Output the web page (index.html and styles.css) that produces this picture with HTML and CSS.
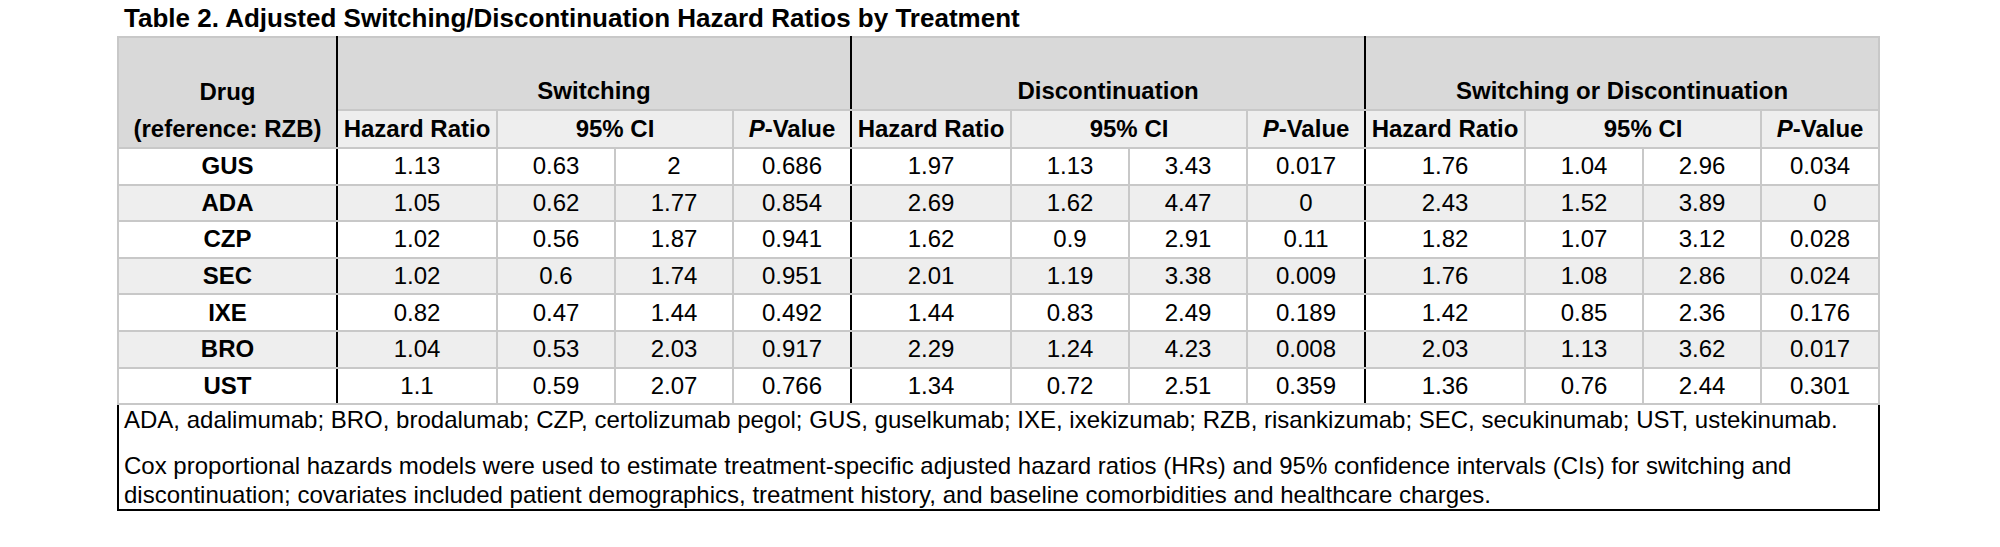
FILE: index.html
```html
<!DOCTYPE html>
<html lang="en">
<head>
<meta charset="utf-8">
<title>Table 2. Adjusted Switching/Discontinuation Hazard Ratios by Treatment</title>
<link rel="stylesheet" href="styles.css">
</head>
<body>
<div class="page">
  <h1 class="title">Table 2. Adjusted Switching/Discontinuation Hazard Ratios by Treatment</h1>
  <table class="hr-table">
    <colgroup>
      <col class="c-drug">
      <col class="c-hr"><col class="c-ci"><col class="c-ci"><col class="c-p">
      <col class="c-hr"><col class="c-ci"><col class="c-ci"><col class="c-p">
      <col class="c-hr"><col class="c-ci"><col class="c-ci"><col class="c-p">
    </colgroup>
    <thead>
      <tr class="head-1">
        <th rowspan="2" class="drug-head group-end">Drug<br>(reference: RZB)</th>
        <th colspan="4" class="group-end">Switching</th>
        <th colspan="4" class="group-end">Discontinuation</th>
        <th colspan="4">Switching or Discontinuation</th>
      </tr>
      <tr class="head-2">
        <th>Hazard Ratio</th><th colspan="2">95% CI</th><th class="group-end"><i>P</i>-Value</th>
        <th>Hazard Ratio</th><th colspan="2">95% CI</th><th class="group-end"><i>P</i>-Value</th>
        <th>Hazard Ratio</th><th colspan="2">95% CI</th><th><i>P</i>-Value</th>
      </tr>
    </thead>
    <tbody>
      <tr><th class="group-end">GUS</th><td>1.13</td><td>0.63</td><td>2</td><td class="group-end">0.686</td><td>1.97</td><td>1.13</td><td>3.43</td><td class="group-end">0.017</td><td>1.76</td><td>1.04</td><td>2.96</td><td>0.034</td></tr>
      <tr class="shade"><th class="group-end">ADA</th><td>1.05</td><td>0.62</td><td>1.77</td><td class="group-end">0.854</td><td>2.69</td><td>1.62</td><td>4.47</td><td class="group-end">0</td><td>2.43</td><td>1.52</td><td>3.89</td><td>0</td></tr>
      <tr><th class="group-end">CZP</th><td>1.02</td><td>0.56</td><td>1.87</td><td class="group-end">0.941</td><td>1.62</td><td>0.9</td><td>2.91</td><td class="group-end">0.11</td><td>1.82</td><td>1.07</td><td>3.12</td><td>0.028</td></tr>
      <tr class="shade"><th class="group-end">SEC</th><td>1.02</td><td>0.6</td><td>1.74</td><td class="group-end">0.951</td><td>2.01</td><td>1.19</td><td>3.38</td><td class="group-end">0.009</td><td>1.76</td><td>1.08</td><td>2.86</td><td>0.024</td></tr>
      <tr><th class="group-end">IXE</th><td>0.82</td><td>0.47</td><td>1.44</td><td class="group-end">0.492</td><td>1.44</td><td>0.83</td><td>2.49</td><td class="group-end">0.189</td><td>1.42</td><td>0.85</td><td>2.36</td><td>0.176</td></tr>
      <tr class="shade"><th class="group-end">BRO</th><td>1.04</td><td>0.53</td><td>2.03</td><td class="group-end">0.917</td><td>2.29</td><td>1.24</td><td>4.23</td><td class="group-end">0.008</td><td>2.03</td><td>1.13</td><td>3.62</td><td>0.017</td></tr>
      <tr><th class="group-end">UST</th><td>1.1</td><td>0.59</td><td>2.07</td><td class="group-end">0.766</td><td>1.34</td><td>0.72</td><td>2.51</td><td class="group-end">0.359</td><td>1.36</td><td>0.76</td><td>2.44</td><td>0.301</td></tr>
    </tbody>
    <tfoot>
      <tr>
        <td colspan="13" class="notes">
          <p class="note">ADA, adalimumab; BRO, brodalumab; CZP, certolizumab pegol; GUS, guselkumab; IXE, ixekizumab; RZB, risankizumab; SEC, secukinumab; UST, ustekinumab.</p>
          <p class="note note-gap">Cox proportional hazards models were used to estimate treatment-specific adjusted hazard ratios (HRs) and 95% confidence intervals (CIs) for switching and discontinuation; covariates included patient demographics, treatment history, and baseline comorbidities and healthcare charges.</p>
        </td>
      </tr>
    </tfoot>
  </table>
</div>
</body>
</html>
```

FILE: styles.css
```css
html, body {
  margin: 0;
  padding: 0;
  background: #ffffff;
}

body {
  font-family: "Liberation Sans", Arial, sans-serif;
  color: #000000;
}

.page {
  padding-left: 117px;
}

.title {
  margin: 0;
  padding-left: 7px;
  font-size: 26px;
  line-height: 36px;
  font-weight: bold;
}

.hr-table {
  border-collapse: collapse;
  table-layout: fixed;
  width: 1763px;
  border: 2px solid #000000;
  font-size: 24px;
}

.c-drug { width: 219px; }
.c-hr { width: 160px; }
.c-ci { width: 118px; }
.c-p { width: 118px; }

.hr-table th,
.hr-table td {
  border: 2px solid #c8c8c8;
  padding: 0;
  text-align: center;
  white-space: nowrap;
}

.hr-table th {
  font-weight: bold;
}

.hr-table .group-end {
  border-right: 2px solid #000000;
}

.head-1 th {
  background: #d9d9d9;
  height: 71px;
  vertical-align: bottom;
  line-height: 37px;
}

.head-1 .drug-head {
  border-bottom-color: #c8c8c8;
}

.head-2 th {
  background: #eeeeee;
  height: 36px;
  line-height: 36px;
}

tbody tr {
  height: 36.6px;
}

tbody td,
tbody th {
  line-height: 34px;
  background: #ffffff;
}

tbody tr.shade td,
tbody tr.shade th {
  background: #eeeeee;
}

.hr-table .notes {
  text-align: left;
  white-space: normal;
  padding: 0 5px;
  background: #ffffff;
  border-left: 2px solid #000000;
  border-right: 2px solid #000000;
  border-bottom: 2px solid #000000;
}

.note {
  margin: 0;
  line-height: 29px;
}

.note-gap {
  margin-top: 17px;
}
```
